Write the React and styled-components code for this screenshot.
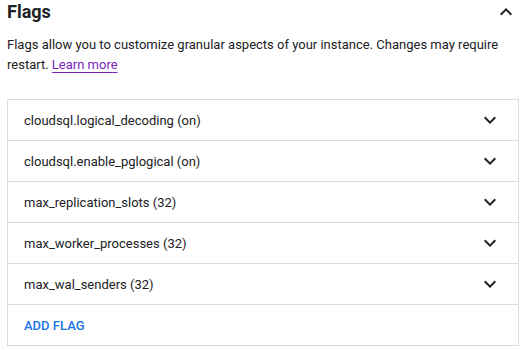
import React, { useState } from 'react';
import styled, { createGlobalStyle } from 'styled-components';

const GlobalStyle = createGlobalStyle`
  body {
    margin: 0;
    background: #ffffff;
    font-family: Roboto, "Liberation Sans", Arial, sans-serif;
    color: #202124;
  }
`;

const Section = styled.section`
  width: 512px;
  padding: 0 6px 0 7px;
`;

const Header = styled.div`
  display: flex;
  align-items: center;
  justify-content: space-between;
  height: 24px;
`;

const Title = styled.h2`
  margin: 0;
  font-size: 18px;
  font-weight: 700;
  line-height: 22px;
  color: #202124;
`;

const IconButton = styled.button`
  display: flex;
  align-items: center;
  justify-content: center;
  width: 24px;
  height: 24px;
  padding: 0;
  margin-right: 1px;
  border: 0;
  background: none;
  color: #202124;
  cursor: pointer;
`;

const Description = styled.p`
  margin: 11px 0 24px;
  font-size: 13px;
  line-height: 20px;
  color: #202124;
`;

const Link = styled.a`
  color: #7627bb;
  text-decoration: underline;
  text-underline-offset: 3px;
`;

const List = styled.div`
  border: 1px solid #dadce0;
`;

const Row = styled.div`
  display: flex;
  align-items: center;
  justify-content: space-between;
  height: 40px;
  padding: 0 16px;
  border-bottom: 1px solid #dadce0;
  font-size: 13px;
  color: ${p => (p.$action ? '#1a73e8' : '#202124')};
  font-weight: ${p => (p.$action ? 500 : 400)};
  cursor: pointer;

  &:last-child {
    border-bottom: 0;
  }
`;

const Chevron = ({ up }) => (
  <svg width="24" height="24" viewBox="0 0 24 24" fill="currentColor">
    {up ? (
      <path d="M7.41 15.41L12 10.83l4.59 4.58L18 14l-6-6-6 6z" />
    ) : (
      <path d="M16.59 8.59L12 13.17 7.41 8.59 6 10l6 6 6-6z" />
    )}
  </svg>
);

const flags = [
  'cloudsql.logical_decoding (on)',
  'cloudsql.enable_pglogical (on)',
  'max_replication_slots (32)',
  'max_worker_processes (32)',
  'max_wal_senders (32)',
];

const App = () => {
  const [open, setOpen] = useState(true);

  return (
    <Section>
      <GlobalStyle />
      <Header>
        <Title>Flags</Title>
        <IconButton onClick={() => setOpen(!open)}>
          <Chevron up={open} />
        </IconButton>
      </Header>
      {open && (
        <>
          <Description>
            Flags allow you to customize granular aspects of your instance. Changes may require
            restart. <Link href="#">Learn more</Link>
          </Description>
          <List>
            {flags.map(flag => (
              <Row key={flag}>
                <span>{flag}</span>
                <Chevron />
              </Row>
            ))}
            <Row $action>ADD FLAG</Row>
          </List>
        </>
      )}
    </Section>
  );
};

export default App;
